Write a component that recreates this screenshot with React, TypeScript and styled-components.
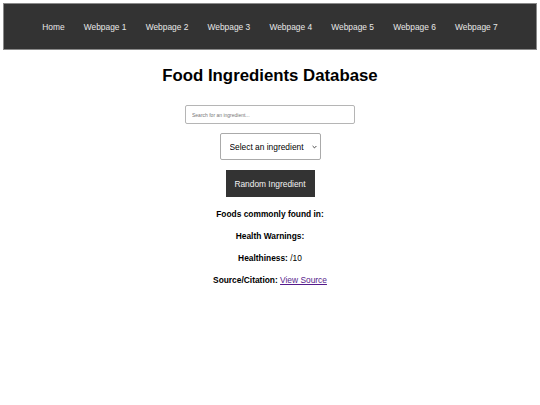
import React, { useState } from 'react'
import styled, { createGlobalStyle } from 'styled-components'

const GlobalStyle = createGlobalStyle`
  body {
    margin: 3px;
    background: #ffffff;
    font-family: 'Liberation Sans', Arial, sans-serif;
    color: #000;
  }
`

const pages = ['Home', 'Webpage 1', 'Webpage 2', 'Webpage 3', 'Webpage 4', 'Webpage 5', 'Webpage 6', 'Webpage 7']

const App: React.FC = () => {
  const [query, setQuery] = useState('')

  return (
    <>
      <GlobalStyle />
      <NavBar>
        {pages.map((p) => (
          <NavLink key={p} href="#">
            {p}
          </NavLink>
        ))}
      </NavBar>
      <Main>
        <Title>Food Ingredients Database</Title>
        <SearchInput
          type="text"
          placeholder="Search for an ingredient..."
          value={query}
          onChange={(e) => setQuery(e.target.value)}
        />
        <SelectWrap>
          <Select defaultValue="">
            <option value="">Select an ingredient</option>
          </Select>
          <Chevron width="5" height="4" viewBox="0 0 5 4">
            <path d="M0.6 1 L2.5 2.9 L4.4 1" fill="none" stroke="#333" strokeWidth="0.9" />
          </Chevron>
        </SelectWrap>
        <RandomButton>Random Ingredient</RandomButton>
        <Info>
          <InfoRow>
            <Label>Foods commonly found in:</Label>
          </InfoRow>
          <InfoRow>
            <Label>Health Warnings:</Label>
          </InfoRow>
          <InfoRow>
            <Label>Healthiness:</Label> /10
          </InfoRow>
          <InfoRow>
            <Label>Source/Citation:</Label> <SourceLink href="#">View Source</SourceLink>
          </InfoRow>
        </Info>
      </Main>
    </>
  )
}

const NavBar = styled.nav`
  display: flex;
  justify-content: center;
  align-items: center;
  height: 45px;
  background: #333333;
  border: 1px solid #8a8a8a;
`

const NavLink = styled.a`
  color: #e8e8e8;
  text-decoration: none;
  font-size: 8.4px;
  padding: 0 9.6px;
`

const Main = styled.main`
  display: flex;
  flex-direction: column;
  align-items: center;
  text-align: center;
`

const Title = styled.h1`
  font-size: 16.8px;
  font-weight: bold;
  margin: 16px 0 19px;
`

const SearchInput = styled.input`
  box-sizing: border-box;
  width: 170px;
  height: 19px;
  padding: 0 6px;
  border: 1px solid #b5b5b5;
  border-radius: 2px;
  font-family: 'Liberation Sans', Arial, sans-serif;
  font-size: 5px;
  outline: none;
  &::placeholder {
    color: #777;
  }
`

const SelectWrap = styled.div`
  position: relative;
  margin-top: 9px;
  width: 101px;
  height: 27px;
`

const Select = styled.select`
  box-sizing: border-box;
  appearance: none;
  width: 100%;
  height: 100%;
  padding: 0 0 0 9px;
  border: 1px solid #aaa;
  border-radius: 2px;
  background: #fff;
  font-family: 'Liberation Sans', Arial, sans-serif;
  font-size: 8.4px;
  color: #000;
  outline: none;
`

const Chevron = styled.svg`
  position: absolute;
  right: 4px;
  top: 12px;
  pointer-events: none;
`

const RandomButton = styled.button`
  box-sizing: border-box;
  margin-top: 10px;
  width: 89px;
  height: 27px;
  border: none;
  background: #333333;
  color: #f2f2f2;
  font-family: 'Liberation Sans', Arial, sans-serif;
  font-size: 8.4px;
  cursor: pointer;
`

const Info = styled.div`
  margin-top: 12px;
  display: flex;
  flex-direction: column;
  gap: 12px;
`

const InfoRow = styled.p`
  margin: 0;
  font-size: 8.4px;
  line-height: 10px;
`

const Label = styled.strong`
  font-weight: bold;
`

const SourceLink = styled.a`
  color: #551a8b;
`

export default App
